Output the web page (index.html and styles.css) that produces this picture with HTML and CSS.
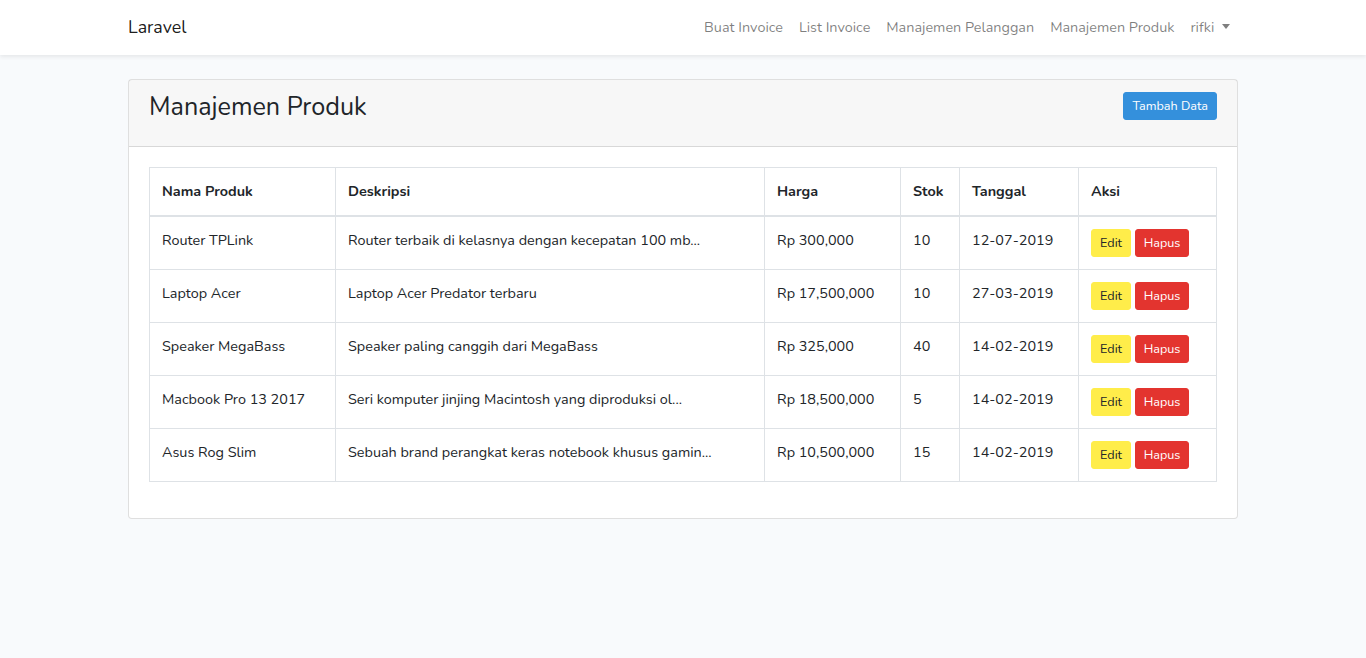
FILE: index.html
```html
<!DOCTYPE html>
<html lang="id">
<head>
<meta charset="utf-8">
<title>Manajemen Produk</title>
<link rel="stylesheet" href="styles.css">
</head>
<body>
<nav class="navbar">
  <div class="container nav-inner">
    <a class="brand" href="#">Laravel</a>
    <ul class="nav-links">
      <li><a class="nav-link" href="#">Buat Invoice</a></li>
      <li><a class="nav-link" href="#">List Invoice</a></li>
      <li><a class="nav-link" href="#">Manajemen Pelanggan</a></li>
      <li><a class="nav-link" href="#">Manajemen Produk</a></li>
      <li><a class="nav-link dropdown" href="#">rifki <span class="caret"></span></a></li>
    </ul>
  </div>
</nav>
<main class="main">
  <div class="container">
    <div class="card">
      <div class="card-header">
        <h2 class="card-title">Manajemen Produk</h2>
        <a class="btn btn-sm btn-primary" href="#">Tambah Data</a>
      </div>
      <div class="card-body">
        <table class="table">
          <thead>
            <tr>
              <th class="c-nama">Nama Produk</th>
              <th class="c-desk">Deskripsi</th>
              <th class="c-harga">Harga</th>
              <th class="c-stok">Stok</th>
              <th class="c-tgl">Tanggal</th>
              <th class="c-aksi">Aksi</th>
            </tr>
          </thead>
          <tbody>
            <tr>
              <td>Router TPLink</td>
              <td>Router terbaik di kelasnya dengan kecepatan 100 mb...</td>
              <td>Rp 300,000</td>
              <td>10</td>
              <td>12-07-2019</td>
              <td><a class="btn btn-sm btn-warning" href="#">Edit</a> <a class="btn btn-sm btn-danger" href="#">Hapus</a></td>
            </tr>
            <tr>
              <td>Laptop Acer</td>
              <td>Laptop Acer Predator terbaru</td>
              <td>Rp 17,500,000</td>
              <td>10</td>
              <td>27-03-2019</td>
              <td><a class="btn btn-sm btn-warning" href="#">Edit</a> <a class="btn btn-sm btn-danger" href="#">Hapus</a></td>
            </tr>
            <tr>
              <td>Speaker MegaBass</td>
              <td>Speaker paling canggih dari MegaBass</td>
              <td>Rp 325,000</td>
              <td>40</td>
              <td>14-02-2019</td>
              <td><a class="btn btn-sm btn-warning" href="#">Edit</a> <a class="btn btn-sm btn-danger" href="#">Hapus</a></td>
            </tr>
            <tr>
              <td>Macbook Pro 13 2017</td>
              <td>Seri komputer jinjing Macintosh yang diproduksi ol...</td>
              <td>Rp 18,500,000</td>
              <td>5</td>
              <td>14-02-2019</td>
              <td><a class="btn btn-sm btn-warning" href="#">Edit</a> <a class="btn btn-sm btn-danger" href="#">Hapus</a></td>
            </tr>
            <tr>
              <td>Asus Rog Slim</td>
              <td>Sebuah brand perangkat keras notebook khusus gamin...</td>
              <td>Rp 10,500,000</td>
              <td>15</td>
              <td>14-02-2019</td>
              <td><a class="btn btn-sm btn-warning" href="#">Edit</a> <a class="btn btn-sm btn-danger" href="#">Hapus</a></td>
            </tr>
          </tbody>
        </table>
      </div>
    </div>
  </div>
</main>
</body>
</html>
```
FILE: styles.css
```css
* { box-sizing: border-box; }
html, body { margin: 0; }
body {
  background: #f8fafc;
  color: #212529;
  font-family: "Nunito", "Lato", "Noto Sans", sans-serif;
  font-size: 14.4px;
  line-height: 1.6;
}
a { text-decoration: none; }
.container {
  width: 1110px;
  margin: 0 auto;
}
.navbar {
  background: #fff;
  box-shadow: 0 2px 4px rgba(0,0,0,.075);
  padding: 8px 0;
  height: 55px;
}
.nav-inner {
  display: flex;
  align-items: center;
  justify-content: space-between;
  height: 39px;
}
.brand {
  color: rgba(0,0,0,.9);
  font-size: 17.8px;
  line-height: 1.6;
}
.nav-links {
  list-style: none;
  display: flex;
  margin: 0;
  padding: 0;
}
.nav-link {
  display: block;
  padding: 8px;
  color: rgba(0,0,0,.5);
}
.caret {
  display: inline-block;
  margin-left: 4px;
  vertical-align: 3px;
  border-top: 5px solid rgba(0,0,0,.5);
  border-left: 4.5px solid transparent;
  border-right: 4.5px solid transparent;
}
.main { padding: 24px 0; }
.card {
  background: #fff;
  border: 1px solid rgba(0,0,0,.125);
  border-radius: 4px;
}
.card-header {
  background: rgba(0,0,0,.03);
  border-bottom: 1px solid rgba(0,0,0,.125);
  padding: 12px 20px;
  display: flex;
  justify-content: space-between;
  align-items: flex-start;
}
.card-title {
  margin: 0 0 11px;
  font-size: 25.2px;
  font-weight: 400;
  line-height: 31px;
}
.card-body { padding: 20px 20px 22px; }
.btn {
  display: inline-block;
  border: 1px solid transparent;
  border-radius: 3px;
  font-size: 12.6px;
  line-height: 18px;
  padding: 4px 8px;
  vertical-align: middle;
}
.btn-primary { background: #3490dc; border-color: #3490dc; color: #fff; }
.btn-warning { background: #ffed4a; border-color: #ffed4a; color: #212529; }
.btn-danger { background: #e3342f; border-color: #e3342f; color: #fff; }
.table {
  width: 100%;
  border-collapse: collapse;
  table-layout: fixed;
  margin-bottom: 14.4px;
}
.table th, .table td {
  border: 1px solid #dee2e6;
  padding: 12px;
  text-align: left;
  vertical-align: top;
}
.table th { font-weight: 700; }
.table thead th { border-bottom: 2px solid #dee2e6; }
.c-nama { width: 186px; }
.c-desk { width: 429px; }
.c-harga { width: 136px; }
.c-stok { width: 59px; }
.c-tgl { width: 119px; }
.c-aksi { width: 138px; }
```
